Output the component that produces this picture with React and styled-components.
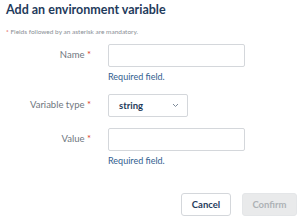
import React from 'react';
import styled, { createGlobalStyle } from 'styled-components';

const GlobalStyle = createGlobalStyle`
  html, body {
    margin: 0;
    padding: 0;
    background: #fff;
  }
  body {
    font-family: Lato, "Open Sans", sans-serif;
  }
`;

const Dialog = styled.div`
  width: 300px;
  height: 220px;
  box-sizing: border-box;
  padding: 1px 3px 0 6px;
  display: flex;
  flex-direction: column;
  overflow: hidden;
`;

const Title = styled.h2`
  margin: 0;
  font-size: 12.5px;
  line-height: 18px;
  font-weight: 700;
  color: #1f3b5c;
  white-space: nowrap;
`;

const Note = styled.p`
  margin: 8px 0 0;
  font-size: 6.5px;
  line-height: 9px;
  color: #8a8f96;
`;

const Star = styled.span`
  color: #e0422f;
`;

const Form = styled.div`
  display: grid;
  grid-template-columns: 85px 137px;
  column-gap: 17px;
  margin-top: 8px;
`;

const Label = styled.label`
  font-size: 9.5px;
  line-height: 22px;
  color: #6f7780;
  text-align: right;
  white-space: nowrap;
`;

const Field = styled.div`
  display: flex;
  flex-direction: column;
  margin-bottom: ${(p) => p.$gap}px;
`;

const Input = styled.input`
  box-sizing: border-box;
  width: 137px;
  height: 23px;
  border: 1px solid #d4d7db;
  border-radius: 2px;
  outline: none;
  font: inherit;
`;

const Error = styled.span`
  margin-top: 4px;
  font-size: 9px;
  line-height: 11px;
  color: #32608f;
`;

const Select = styled.div`
  box-sizing: border-box;
  width: 80px;
  height: 23px;
  border: 1px solid #d4d7db;
  border-radius: 2px;
  padding: 0 8px 0 10px;
  display: flex;
  align-items: center;
  justify-content: space-between;
  font-size: 9.5px;
  font-weight: 700;
  color: #1f3b5c;
`;

const Footer = styled.div`
  margin-top: auto;
  margin-bottom: 4px;
  display: flex;
  justify-content: flex-end;
  gap: 11px;
`;

const Button = styled.button`
  box-sizing: border-box;
  height: 23px;
  width: ${(p) => p.$w}px;
  border-radius: 3px;
  font-family: inherit;
  font-size: 9.5px;
  font-weight: 700;
  border: 1px solid ${(p) => (p.$disabled ? '#e4e6e8' : '#d4d7db')};
  background: ${(p) => (p.$disabled ? '#e9eaeb' : '#fff')};
  color: ${(p) => (p.$disabled ? '#aeb2b6' : '#1f3b5c')};
  padding: 0;
`;

function Chevron() {
  return (
    <svg width="7" height="5" viewBox="0 0 7 5" fill="none">
      <path d="M1 1l2.5 2.5L6 1" stroke="#7d8a99" strokeWidth="1" />
    </svg>
  );
}

export default function App() {
  return (
    <>
      <GlobalStyle />
      <Dialog>
        <Title>Add an environment variable</Title>
        <Note>
          <Star>*</Star> Fields followed by an asterisk are mandatory.
        </Note>
        <Form>
          <Label>
            Name <Star>*</Star>
          </Label>
          <Field $gap={12}>
            <Input />
            <Error>Required field.</Error>
          </Field>
          <Label>
            Variable type <Star>*</Star>
          </Label>
          <Field $gap={11}>
            <Select>
              string
              <Chevron />
            </Select>
          </Field>
          <Label>
            Value <Star>*</Star>
          </Label>
          <Field $gap={0}>
            <Input />
            <Error>Required field.</Error>
          </Field>
        </Form>
        <Footer>
          <Button $w={50}>Cancel</Button>
          <Button $w={55} $disabled>
            Confirm
          </Button>
        </Footer>
      </Dialog>
    </>
  );
}
